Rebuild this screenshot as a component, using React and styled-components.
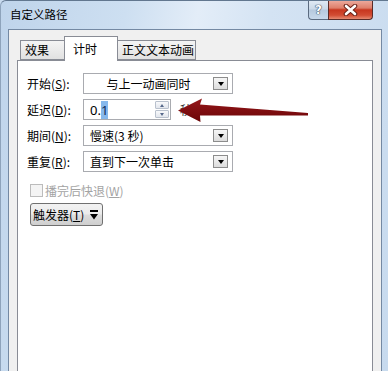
import React from 'react';
import styled, { createGlobalStyle } from 'styled-components';

const Global = createGlobalStyle`
  html, body { margin: 0; padding: 0; overflow: hidden; background: #c9dbef; }
  body { font-family: "Noto Sans CJK SC", "Microsoft YaHei", sans-serif; }
  * { box-sizing: border-box; }
`;

const Window = styled.div`
  position: relative;
  width: 388px;
  height: 371px;
  overflow: hidden;
  display: flex;
  flex-direction: column;
  border-top: 1px solid #62778f;
  border-left: 1px solid #8ea3bb;
  border-top-left-radius: 6px;
  background: linear-gradient(100deg, #bfd4eb 0%, #cddff1 28%, #e3edf8 44%, #d4e3f3 60%, #c7daee 100%);
`;

const TitleBar = styled.div`
  height: 28px;
  flex: none;
  display: flex;
  align-items: flex-start;
  padding-left: 9px;
`;

const Title = styled.div`
  font-size: 11.5px;
  line-height: 27px;
  color: #000;
`;

const Caption = styled.div`
  margin-left: auto;
  margin-right: 15px;
  margin-top: -1px;
  display: flex;
`;

const HelpButton = styled.div`
  width: 20px;
  height: 20px;
  border: 1px solid #5b6b80;
  border-top: none;
  border-right: none;
  border-bottom-left-radius: 4px;
  background: linear-gradient(#e2ebf5 0%, #cbd9e8 48%, #b6c9de 52%, #c8d9eb 100%);
  display: flex;
  align-items: center;
  justify-content: center;
  font-family: "DejaVu Sans", sans-serif;
  font-weight: bold;
  font-size: 12px;
  color: #fff;
  text-shadow: 0 0 1px #3a4a60, 0 0 1px #3a4a60, 0 0 1px #3a4a60;
`;

const CloseButton = styled.div`
  width: 45px;
  height: 20px;
  border: 1px solid #5a2c28;
  border-top: none;
  border-bottom-right-radius: 4px;
  background: linear-gradient(#eeaea2 0%, #de7f6b 42%, #c7361f 52%, #d24c33 80%, #e58a72 100%);
  display: flex;
  align-items: center;
  justify-content: center;
`;

const Client = styled.div`
  flex: 1;
  margin: 0 6px 0 7px;
  border: 1px solid #7489a3;
  border-bottom: none;
  background: #f0f0f0;
  padding: 6px 8px 0 8px;
  display: flex;
  flex-direction: column;
`;

const TabStrip = styled.div`
  height: 25px;
  flex: none;
  display: flex;
  align-items: flex-end;
  padding-left: 3px;
`;

const Tab = styled.div`
  position: relative;
  width: ${p => p.$w}px;
  height: ${p => (p.$active ? 25 : 20)}px;
  margin: ${p => (p.$active ? '0 -2px 0 -2px' : '0 0 1px 0')};
  z-index: ${p => (p.$active ? 2 : 1)};
  border: 1px solid #898c95;
  border-bottom: ${p => (p.$active ? 'none' : '1px solid #898c95')};
  background: ${p => (p.$active ? '#ffffff' : 'linear-gradient(#f4f4f4 0%, #ebebeb 50%, #e1e1e1 100%)')};
  padding-left: ${p => p.$pl}px;
  padding-top: ${p => (p.$active ? 2 : 0)}px;
  font-size: 12px;
  line-height: ${p => (p.$active ? 20 : 18)}px;
  color: #000;
  white-space: nowrap;
`;

const Panel = styled.div`
  flex: 1;
  margin-top: -1px;
  border: 1px solid #898c95;
  border-bottom: none;
  background: #fff;
  padding: 12px 0 0 9px;
  display: flex;
  flex-direction: column;
  align-items: flex-start;
`;

const Form = styled.div`
  display: grid;
  grid-template-columns: 56px auto;
  grid-auto-rows: 21px;
  row-gap: 5px;
  align-items: center;
`;

const Label = styled.div`
  font-size: 12px;
  line-height: 16px;
  color: #000;
  white-space: nowrap;
`;

const Key = styled.span`
  text-decoration: underline;
  text-underline-offset: 1px;
`;

const Combo = styled.div`
  width: 150px;
  height: 21px;
  border: 1px solid #a9abb0;
  background: #fff;
  display: flex;
  align-items: center;
`;

const ComboText = styled.div`
  flex: 1;
  font-size: 12px;
  line-height: 16px;
  color: #000;
  text-align: ${p => (p.$center ? 'center' : 'left')};
  padding-left: ${p => (p.$center ? 0 : 6)}px;
  white-space: nowrap;
`;

const DropButton = styled.div`
  width: 15px;
  height: 13px;
  margin-right: 4px;
  border: 1px solid #8c8c8c;
  background: linear-gradient(#f6f6f6, #dcdcdc);
  display: flex;
  align-items: center;
  justify-content: center;
`;

const Triangle = styled.div`
  width: 0;
  height: 0;
  border-left: ${p => p.$size}px solid transparent;
  border-right: ${p => p.$size}px solid transparent;
  ${p => (p.$up
    ? `border-bottom: ${p.$h}px solid ${p.$color};`
    : `border-top: ${p.$h}px solid ${p.$color};`)}
`;

const DelayCell = styled.div`
  display: flex;
  align-items: center;
`;

const Spin = styled.div`
  width: 88px;
  height: 21px;
  border: 1px solid #a9abb0;
  background: #fff;
  display: flex;
  align-items: center;
  padding-left: 6px;
`;

const SpinValue = styled.div`
  flex: 1;
  font-size: 13px;
  line-height: 16px;
  color: #000;
  font-family: "Noto Sans", sans-serif;
`;

const Selected = styled.span`
  background: #86b8ec;
  color: #102a55;
`;

const SpinButtons = styled.div`
  display: flex;
  flex-direction: column;
  gap: 1px;
  margin-right: 1px;
`;

const SpinButton = styled.div`
  width: 14px;
  height: 8px;
  border: 1px solid #b9c1cd;
  border-radius: 1px;
  background: linear-gradient(#f8f9fb, #e2e6ed);
  display: flex;
  align-items: center;
  justify-content: center;
`;

const Unit = styled.div`
  margin-left: 9px;
  font-size: 12px;
  line-height: 16px;
  color: #333;
`;

const CheckRow = styled.label`
  margin-top: 12px;
  height: 13px;
  display: flex;
  align-items: center;
  margin-left: 3px;
`;

const CheckBox = styled.div`
  width: 13px;
  height: 13px;
  border: 1px solid #bcbcbc;
  background: #f4f4f4;
`;

const CheckText = styled.div`
  margin-left: 2px;
  font-size: 12px;
  line-height: 13px;
  color: #a3a3a3;
  white-space: nowrap;
`;

const TriggerButton = styled.div`
  margin-top: 6px;
  margin-left: 3px;
  width: 73px;
  height: 23px;
  border: 1px solid #707070;
  border-radius: 3px;
  background: linear-gradient(#f2f2f2 0%, #ebebeb 49%, #dddddd 51%, #cfcfcf 100%);
  display: flex;
  align-items: center;
  padding-left: 2px;
  font-size: 12px;
  line-height: 16px;
  color: #000;
  white-space: nowrap;
`;

const SplitGlyph = styled.svg`
  margin-left: 6px;
  display: block;
`;

const ArrowOverlay = styled.svg`
  position: absolute;
  left: 174px;
  top: 94px;
  pointer-events: none;
`;

export default function App() {
  return (
    <>
      <Global />
      <Window>
        <TitleBar>
          <Title>自定义路径</Title>
          <Caption>
            <HelpButton>?</HelpButton>
            <CloseButton>
              <svg width="15" height="12" viewBox="0 0 15 12">
                <path d="M3 2 L12 10 M12 2 L3 10" stroke="#6b2218" strokeWidth="4.6" strokeLinecap="round" />
                <path d="M3 2 L12 10 M12 2 L3 10" stroke="#ffffff" strokeWidth="2.6" strokeLinecap="round" />
              </svg>
            </CloseButton>
          </Caption>
        </TitleBar>
        <Client>
          <TabStrip>
            <Tab $w={46} $pl={4}>效果</Tab>
            <Tab $w={54} $pl={8} $active>计时</Tab>
            <Tab $w={80} $pl={5}>正文文本动画</Tab>
          </TabStrip>
          <Panel>
            <Form>
              <Label>开始(<Key>S</Key>):</Label>
              <Combo>
                <ComboText $center>与上一动画同时</ComboText>
                <DropButton><Triangle $size={3.5} $h={4} $color="#000" /></DropButton>
              </Combo>

              <Label>延迟(<Key>D</Key>):</Label>
              <DelayCell>
                <Spin>
                  <SpinValue>0.<Selected>1</Selected></SpinValue>
                  <SpinButtons>
                    <SpinButton><Triangle $size={2.5} $h={3} $color="#56688a" $up /></SpinButton>
                    <SpinButton><Triangle $size={2.5} $h={3} $color="#56688a" /></SpinButton>
                  </SpinButtons>
                </Spin>
                <Unit>秒</Unit>
              </DelayCell>

              <Label>期间(<Key>N</Key>):</Label>
              <Combo>
                <ComboText>慢速(3 秒)</ComboText>
                <DropButton><Triangle $size={3.5} $h={4} $color="#000" /></DropButton>
              </Combo>

              <Label>重复(<Key>R</Key>):</Label>
              <Combo>
                <ComboText>直到下一次单击</ComboText>
                <DropButton><Triangle $size={3.5} $h={4} $color="#000" /></DropButton>
              </Combo>
            </Form>

            <CheckRow>
              <CheckBox />
              <CheckText>播完后快退(<Key>W</Key>)</CheckText>
            </CheckRow>

            <TriggerButton>
              触发器(<Key>T</Key>)
              <SplitGlyph width="8" height="10" viewBox="0 0 8 10">
                <rect x="0" y="0" width="8" height="2" fill="#000" />
                <polygon points="0,4 8,4 4,9.5" fill="#000" />
              </SplitGlyph>
            </TriggerButton>
          </Panel>
        </Client>
        <ArrowOverlay width="136" height="32" viewBox="0 0 136 32">
          <defs>
            <linearGradient id="arrowFill" x1="0" y1="0" x2="0" y2="1">
              <stop offset="0" stopColor="#96171a" />
              <stop offset="1" stopColor="#6a0507" />
            </linearGradient>
          </defs>
          <path
            d="M3 15.5 L27 3.5 L25 9.5 L133 18 L133 20.5 L25 20.5 L25.5 27 Z"
            fill="url(#arrowFill)"
          />
        </ArrowOverlay>
      </Window>
    </>
  );
}
